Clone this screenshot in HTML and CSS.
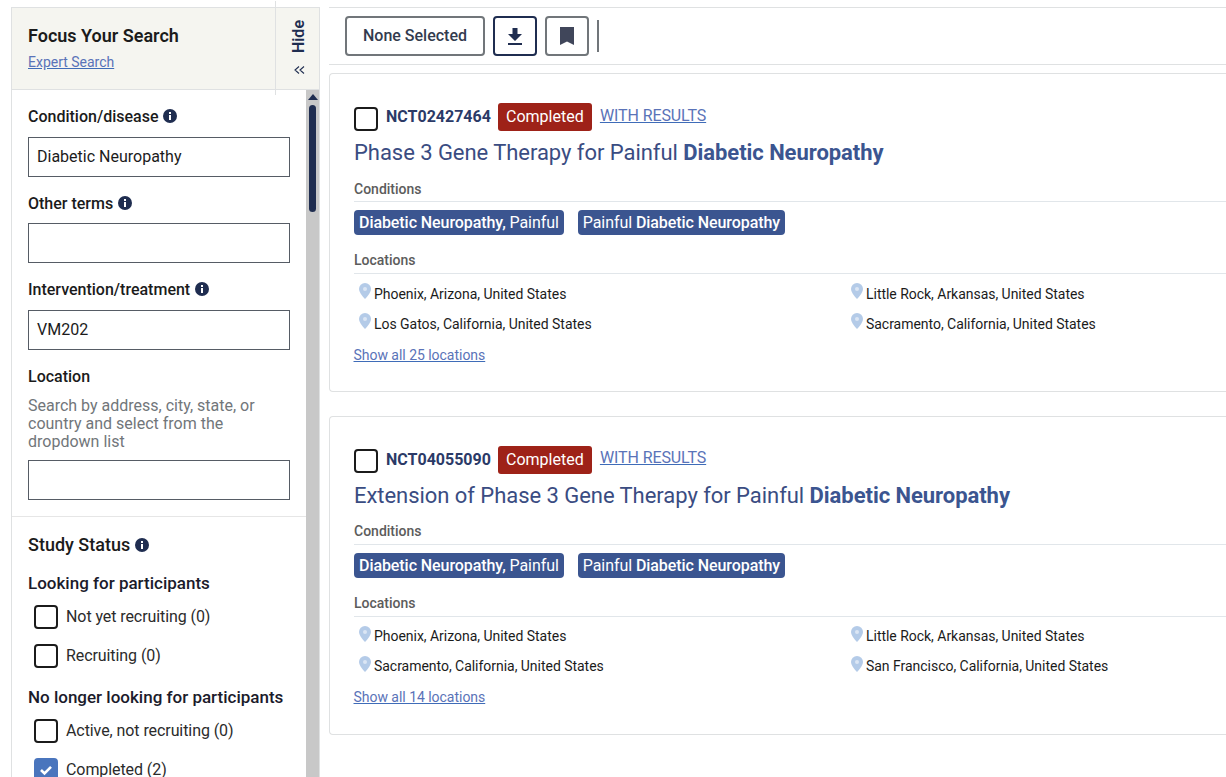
FILE: index.html
```html
<!DOCTYPE html>
<html lang="en">
<head>
<meta charset="utf-8">
<title>Search results</title>
<link rel="stylesheet" href="styles.css">
</head>
<body>
<div class="page">
  <aside class="sidebar">
    <header class="side-head">
      <div class="side-title">
        <h2>Focus Your Search</h2>
        <a class="link expert" href="#">Expert Search</a>
      </div>
      <div class="hide-toggle">
        <span class="hide-text">Hide</span>
        <svg class="chev" width="11" height="8" viewBox="0 0 11 8"><path d="M5 .5 1 4l4 3.500M10 .5 6 4l4 3.500" fill="none" stroke="#1f2d50" stroke-width="1.1"/></svg>
      </div>
    </header>
    <div class="side-body">
      <div class="side-scroll">
        <section class="fields">
          <label class="f-label">Condition/disease <svg class="info" viewBox="0 0 14 14"><circle cx="7" cy="7" r="7" fill="#1f2d50"/><rect x="6" y="6" width="2" height="5" fill="#fff"/><rect x="6" y="3" width="2" height="2" fill="#fff"/></svg></label>
          <div class="input">Diabetic Neuropathy</div>
          <label class="f-label">Other terms <svg class="info" viewBox="0 0 14 14"><circle cx="7" cy="7" r="7" fill="#1f2d50"/><rect x="6" y="6" width="2" height="5" fill="#fff"/><rect x="6" y="3" width="2" height="2" fill="#fff"/></svg></label>
          <div class="input"></div>
          <label class="f-label">Intervention/treatment <svg class="info" viewBox="0 0 14 14"><circle cx="7" cy="7" r="7" fill="#1f2d50"/><rect x="6" y="6" width="2" height="5" fill="#fff"/><rect x="6" y="3" width="2" height="2" fill="#fff"/></svg></label>
          <div class="input">VM202</div>
          <label class="f-label">Location</label>
          <p class="hint">Search by address, city, state, or country and select from the dropdown list</p>
          <div class="input"></div>
        </section>
        <section class="status">
          <h3>Study Status <svg class="info" viewBox="0 0 14 14"><circle cx="7" cy="7" r="7" fill="#1f2d50"/><rect x="6" y="6" width="2" height="5" fill="#fff"/><rect x="6" y="3" width="2" height="2" fill="#fff"/></svg></h3>
          <h4>Looking for participants</h4>
          <div class="opt"><span class="box"></span>Not yet recruiting (0)</div>
          <div class="opt"><span class="box"></span>Recruiting (0)</div>
          <h4 class="second">No longer looking for participants</h4>
          <div class="opt"><span class="box"></span>Active, not recruiting (0)</div>
          <div class="opt"><span class="box checked"><svg width="14" height="12" viewBox="0 0 14 12"><path d="M2 6 5.500 9.500 12 2.800" fill="none" stroke="#fff" stroke-width="2.600"/></svg></span>Completed (2)</div>
        </section>
      </div>
      <div class="scrollbar">
        <svg class="sb-arrow" width="10" height="6" viewBox="0 0 10 6"><path d="M5 0 10 6H0Z" fill="#1f2d50"/></svg>
        <div class="sb-thumb"></div>
      </div>
    </div>
  </aside>

  <main class="main">
    <div class="toolbar">
      <button class="btn none">None Selected</button>
      <button class="btn icon dl"><svg width="14" height="17" viewBox="0 0 14 17"><path d="M4.500 0h5v6H14L7 13 0 6h4.500Z" fill="#1f2d50"/><rect y="15" width="14" height="2" fill="#1f2d50"/></svg></button>
      <button class="btn icon"><svg width="14" height="18" viewBox="0 0 14 18"><path d="M0 0h14v18L7 14.500 0 18Z" fill="#40465a"/></svg></button>
      <span class="sep"></span>
    </div>

    <article class="card">
      <div class="id-row">
        <span class="box"></span>
        <span class="nct">NCT02427464</span>
        <span class="badge">Completed</span>
        <a class="link results" href="#">WITH RESULTS</a>
      </div>
      <h2 class="title">Phase 3 Gene Therapy for Painful <b>Diabetic Neuropathy</b></h2>
      <div class="sec-label">Conditions</div>
      <div class="tags">
        <span class="tag"><b>Diabetic Neuropathy,</b> Painful</span>
        <span class="tag">Painful <b>Diabetic Neuropathy</b></span>
      </div>
      <div class="sec-label loc-label">Locations</div>
      <div class="locs">
        <div class="loc"><svg class="pin" viewBox="0 0 12 16"><path d="M6 0a6 6 0 0 1 6 6c0 4-6 10-6 10S0 10 0 6a6 6 0 0 1 6-6Z" fill="#b4cbe8"/><circle cx="6" cy="6" r="2" fill="#dbe6f4"/></svg>Phoenix, Arizona, United States</div>
        <div class="loc"><svg class="pin" viewBox="0 0 12 16"><path d="M6 0a6 6 0 0 1 6 6c0 4-6 10-6 10S0 10 0 6a6 6 0 0 1 6-6Z" fill="#b4cbe8"/><circle cx="6" cy="6" r="2" fill="#dbe6f4"/></svg>Little Rock, Arkansas, United States</div>
        <div class="loc"><svg class="pin" viewBox="0 0 12 16"><path d="M6 0a6 6 0 0 1 6 6c0 4-6 10-6 10S0 10 0 6a6 6 0 0 1 6-6Z" fill="#b4cbe8"/><circle cx="6" cy="6" r="2" fill="#dbe6f4"/></svg>Los Gatos, California, United States</div>
        <div class="loc"><svg class="pin" viewBox="0 0 12 16"><path d="M6 0a6 6 0 0 1 6 6c0 4-6 10-6 10S0 10 0 6a6 6 0 0 1 6-6Z" fill="#b4cbe8"/><circle cx="6" cy="6" r="2" fill="#dbe6f4"/></svg>Sacramento, California, United States</div>
      </div>
      <a class="link show" href="#">Show all 25 locations</a>
    </article>

    <article class="card">
      <div class="id-row">
        <span class="box"></span>
        <span class="nct">NCT04055090</span>
        <span class="badge">Completed</span>
        <a class="link results" href="#">WITH RESULTS</a>
      </div>
      <h2 class="title">Extension of Phase 3 Gene Therapy for Painful <b>Diabetic Neuropathy</b></h2>
      <div class="sec-label">Conditions</div>
      <div class="tags">
        <span class="tag"><b>Diabetic Neuropathy,</b> Painful</span>
        <span class="tag">Painful <b>Diabetic Neuropathy</b></span>
      </div>
      <div class="sec-label loc-label">Locations</div>
      <div class="locs">
        <div class="loc"><svg class="pin" viewBox="0 0 12 16"><path d="M6 0a6 6 0 0 1 6 6c0 4-6 10-6 10S0 10 0 6a6 6 0 0 1 6-6Z" fill="#b4cbe8"/><circle cx="6" cy="6" r="2" fill="#dbe6f4"/></svg>Phoenix, Arizona, United States</div>
        <div class="loc"><svg class="pin" viewBox="0 0 12 16"><path d="M6 0a6 6 0 0 1 6 6c0 4-6 10-6 10S0 10 0 6a6 6 0 0 1 6-6Z" fill="#b4cbe8"/><circle cx="6" cy="6" r="2" fill="#dbe6f4"/></svg>Little Rock, Arkansas, United States</div>
        <div class="loc"><svg class="pin" viewBox="0 0 12 16"><path d="M6 0a6 6 0 0 1 6 6c0 4-6 10-6 10S0 10 0 6a6 6 0 0 1 6-6Z" fill="#b4cbe8"/><circle cx="6" cy="6" r="2" fill="#dbe6f4"/></svg>Sacramento, California, United States</div>
        <div class="loc"><svg class="pin" viewBox="0 0 12 16"><path d="M6 0a6 6 0 0 1 6 6c0 4-6 10-6 10S0 10 0 6a6 6 0 0 1 6-6Z" fill="#b4cbe8"/><circle cx="6" cy="6" r="2" fill="#dbe6f4"/></svg>San Francisco, California, United States</div>
      </div>
      <a class="link show" href="#">Show all 14 locations</a>
    </article>
  </main>
</div>
</body>
</html>
```

FILE: styles.css
```css
* { box-sizing: border-box; }
html, body { margin: 0; height: 100%; overflow: hidden; background: #fff; }
body { font-family: Roboto, "Liberation Sans", sans-serif; color: #1b1b1b; font-size: 16px; }
h2, h3, h4, p { margin: 0; }

.page { display: flex; height: 777px; padding: 7px 0 0 11px; gap: 9px; }

.link { color: #5a73b8; text-decoration: underline; text-decoration-color: #3f6cb8; }

/* sidebar */
.sidebar { width: 309px; flex: none; border: 1px solid #dfe1e2; border-bottom: 0; display: flex; flex-direction: column; }
.side-head { position: relative; height: 82px; flex: none; background: #f5f5f0; border-bottom: 1px solid #dfe1e2; display: flex; justify-content: space-between; }
.side-title { padding: 17px 0 0 16px; }
.side-title h2 { font-size: 18px; font-weight: 600; line-height: 22px; color: #1b1b1b; }
.expert { display: block; font-size: 14px; line-height: 16px; margin-top: 7px; font-weight: 400; letter-spacing: -0.01px; }
.hide-toggle { position: relative; width: 44px; display: flex; flex-direction: column; align-items: center; padding: 12px 0 0 4px; }
.hide-toggle::before { content: ""; position: absolute; left: 0; top: -7px; height: 94px; width: 1px; background: #dfe1e2; }
.hide-text { writing-mode: vertical-rl; transform: rotate(180deg); font-weight: 600; font-size: 16px; line-height: 18px; color: #1f2d50; }
.chev { margin-top: 13px; }

.side-body { flex: 1; display: flex; min-height: 0; overflow: hidden; }
.side-scroll { flex: 1; min-width: 0; }
.scrollbar { width: 13px; flex: none; background: #c8c8c8; display: flex; flex-direction: column; align-items: center; padding-top: 4px; }
.sb-arrow { flex: none; }
.sb-thumb { width: 7px; height: 107px; margin-top: 5px; border-radius: 4px; background: #1f2d50; }

.info { width: 14px; height: 14px; flex: none; }
.fields { padding: 16px 16px 16px; border-bottom: 1px solid #e6e6e6; height: 427px; }
.f-label { display: flex; align-items: flex-start; gap: 5px; font-weight: 500; font-size: 16px; height: 20px; line-height: 22px; }
.f-label .info { margin-top: 3px; }
.input { height: 40px; width: 262px; border: 1px solid #565c65; margin: 10.500px 0 16px; padding: 0 8px; line-height: 37px; color: #1b1b1b; }
.hint { color: #71767a; font-size: 16px; line-height: 18px; margin-top: 11.500px; width: 250px; }
.hint + .input { margin-top: 9px; }

.status { padding: 17px 16px 0; }
.status h3 { display: flex; align-items: center; gap: 5px; font-size: 18px; font-weight: 500; line-height: 22px; }
.status h4 { font-size: 17px; font-weight: 500; line-height: 20px; margin-top: 17px; color: #1b1b2b; }
.status h4.second { margin-top: 12px; }
.opt { display: flex; align-items: center; gap: 8px; height: 39px; padding-left: 6px; color: #2b2b2b; letter-spacing: -0.08px; }
h4 + .opt { margin-top: 4px; }
.box { display: inline-flex; align-items: center; justify-content: center; width: 24px; height: 24px; flex: none; border: 2px solid #1b1b1b; border-radius: 4px; background: #fff; }
.box.checked { background: #4a75bd; border-color: #4a75bd; }

/* main */
.main { flex: none; width: 920px; display: flex; flex-direction: column; }
.toolbar { height: 58px; flex: none; border-top: 1px solid #dfe1e2; border-bottom: 1px solid #dfe1e2; display: flex; align-items: center; gap: 8px; padding-left: 16px; margin-bottom: 8px; }
.btn { height: 40px; background: #fff; border: 2px solid #71767a; border-radius: 4px; font: 500 16px Roboto, sans-serif; color: #333b4e; padding: 0; display: flex; align-items: center; justify-content: center; }
.none { width: 140px; padding-bottom: 2px; }
.icon { width: 44px; }
.dl { border-color: #1f2d50; }
.sep { width: 2px; height: 32px; background: #71767a; }

.card { height: 319px; flex: none; margin-bottom: 23.600px; border: 1px solid #dfe1e2; border-right: 0; border-radius: 4px 0 0 4px; padding: 29px 0 0 24px; }
.card:last-child { margin-bottom: 0; }
.id-row { display: flex; align-items: center; height: 28px; }
.id-row .box { margin-top: 3px; }
.nct { margin-left: 8px; font-weight: 700; color: #2b3a67; line-height: 20px; }
.badge { margin-left: 7px; width: 94px; height: 28px; background: #9e2218; color: #fff; border-radius: 3px; text-align: center; line-height: 28px; }
.results { margin-left: 8px; margin-top: -4px; font-weight: 400; letter-spacing: -0.1px; }
.title { font-size: 22px; font-weight: 400; line-height: 28px; color: #3a4c82; margin-top: 8px; letter-spacing: -0.045px; }
.title b { font-weight: 700; color: #3b5590; }
.sec-label { font-size: 14px; font-weight: 500; color: #5c5c5c; line-height: 18px; margin-top: 12.700px; padding-bottom: 3.300px; border-bottom: 1px solid #e1e6ea; }
.tags { display: flex; gap: 14px; margin-top: 8px; }
.tag { height: 25px; line-height: 25px; padding: 0 5px; background: #3b5590; color: #fff; border-radius: 4px; letter-spacing: -0.07px; }
.tag b { font-weight: 500; }
.loc-label { margin-top: 16px; padding-bottom: 4px; }
.locs { display: grid; grid-template-columns: 492px 1fr; grid-auto-rows: 30px; margin-top: 4.700px; }
.loc { display: flex; align-items: center; font-size: 14px; padding-left: 4.500px; color: #1b1b1b; letter-spacing: -0.03px; }
.pin { width: 12px; height: 16px; margin-right: 3.500px; margin-top: -5px; flex: none; }
.show { display: inline-block; font-size: 14px; line-height: 18px; margin-top: 7px; margin-left: -0.5px; font-weight: 400; letter-spacing: -0.03px; }
```
